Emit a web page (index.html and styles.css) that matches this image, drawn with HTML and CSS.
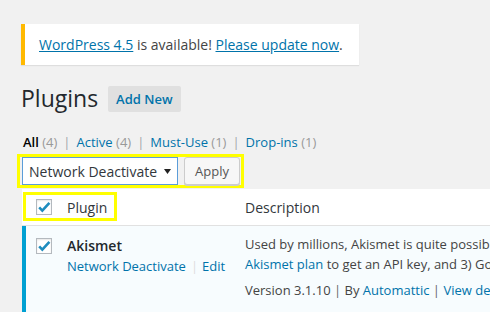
FILE: index.html
```html
<!DOCTYPE html>
<html lang="en">
<head>
  <meta charset="UTF-8" />
  <title>Plugins</title>
  <link rel="stylesheet" href="styles.css">
</head>
<body>
  <div class="wrap">
    <div class="update-nag">
      <a href="#">WordPress 4.5</a> is available! <a href="#">Please update now</a>.
    </div>

    <div class="title-row">
      <h1>Plugins</h1>
      <a href="#" class="add-new">Add New</a>
    </div>

    <ul class="views">
      <li><span class="current">All</span> <span class="count">(4)</span><span class="bar">|</span></li>
      <li><a href="#">Active <span class="count">(4)</span></a><span class="bar">|</span></li>
      <li><a href="#">Must-Use <span class="count">(1)</span></a><span class="bar">|</span></li>
      <li><a href="#">Drop-ins <span class="count">(1)</span></a></li>
    </ul>

    <div class="bulk">
      <div class="select">
        <span>Network Deactivate</span>
        <svg width="7" height="5" viewBox="0 0 7 5"><polygon points="0,0 7,0 3.5,5" fill="#222"/></svg>
      </div>
      <button class="apply">Apply</button>
    </div>

    <div class="plugins">
      <div class="head">
        <span class="mark"></span>
        <div class="check-col">
          <span class="box"><svg width="16" height="16" viewBox="0 0 16 16"><path d="M3.2 8.4 L6.3 11.6 L13.4 3.8" fill="none" stroke="#1e8cbe" stroke-width="2.6"/></svg></span>
        </div>
        <div class="name-col">Plugin</div>
        <div class="desc-col">Description</div>
      </div>

      <div class="row active">
        <div class="check-col">
          <span class="box"><svg width="16" height="16" viewBox="0 0 16 16"><path d="M3.2 8.4 L6.3 11.6 L13.4 3.8" fill="none" stroke="#1e8cbe" stroke-width="2.6"/></svg></span>
        </div>
        <div class="name-col">
          <strong class="plugin-title">Akismet</strong>
          <div class="row-actions"><a href="#">Network Deactivate</a><span class="sep">|</span><a href="#">Edit</a></div>
        </div>
        <div class="desc-col">
          <p>Used by millions, Akismet is quite possibly the best way in the world to protect your blog from spam. 2) <a href="#">Sign up for an</a></p>
          <p><a href="#">Akismet plan</a> to get an API key, and 3) Go to your Akismet configuration page, and save your API key.</p>
          <div class="version">Version 3.1.10 <span class="vsep">|</span> By <a href="#">Automattic</a> <span class="vsep">|</span> <a href="#">View details</a></div>
        </div>
      </div>
    </div>
  </div>
</body>
</html>
```

FILE: styles.css
```css
html, body {
  margin: 0;
  padding: 0;
}

body {
  background: #f1f1f1;
  color: #444;
  font-family: "Open Sans", sans-serif;
  font-size: 13px;
  width: 490px;
  height: 312px;
  overflow: hidden;
}

a {
  color: #0073aa;
  text-decoration: none;
}

.wrap {
  padding: 24px 0 0 21px;
}

.update-nag {
  display: inline-block;
  width: 305px;
  background: #fff;
  border-left: 4px solid #ffb900;
  box-shadow: 0 1px 1px rgba(0, 0, 0, 0.08);
  padding: 11px 15px 11px 14px;
  line-height: 19px;
  font-size: 14px;
  color: #444;
  white-space: nowrap;
}

.update-nag a {
  text-decoration: underline;
}

.title-row {
  display: flex;
  align-items: center;
  gap: 10px;
  margin-top: 19px;
}

h1 {
  margin: 0;
  font-size: 23px;
  font-weight: 400;
  line-height: 29px;
  color: #23282d;
}

.add-new {
  padding: 4px 8px;
  line-height: 18px;
  font-weight: 600;
  background: #e0e0e0;
  border-radius: 2px;
}

.views {
  list-style: none;
  margin: 19px 0 0;
  padding: 0 0 0 2px;
  display: flex;
  line-height: 20px;
  white-space: nowrap;
}

.views .current {
  color: #000;
  font-weight: 600;
}

.views .count {
  color: #999;
  font-weight: 400;
}

.views .bar {
  color: #a0a5aa;
  margin: 0 6px 0 6px;
}

.bulk {
  display: inline-flex;
  gap: 6px;
  margin: 2px 0 0 -4px;
  padding: 0 1px 0 2px;
  border: 3px solid #ffff00;
}

.select {
  box-sizing: border-box;
  width: 156px;
  height: 28px;
  display: flex;
  align-items: center;
  justify-content: space-between;
  padding: 0 6px 0 6px;
  background: #fff;
  border: 1px solid #5b9dd9;
  font-size: 14px;
  color: #32373c;
}

.apply {
  box-sizing: border-box;
  width: 56px;
  height: 28px;
  font: inherit;
  font-size: 13px;
  color: #555;
  background: #f7f7f7;
  border: 1px solid #ccc;
  border-radius: 3px;
  box-shadow: 0 1px 0 #ccc;
  padding: 0;
}

.plugins {
  margin: 1px 0 0 1px;
  background: #fff;
}

.head, .row {
  display: grid;
  grid-template-columns: 35px 178px 1fr;
}

.head {
  position: relative;
  height: 36px;
  align-items: center;
  border-bottom: 1px solid #e1e1e1;
  font-size: 14px;
  color: #32373c;
}

.head .mark {
  position: absolute;
  left: 1px;
  top: 3px;
  width: 94px;
  height: 29px;
  box-sizing: border-box;
  border: 3px solid #ffff00;
}

.check-col {
  padding-left: 14px;
}

.name-col, .desc-col {
  padding-left: 10px;
}

.box {
  display: block;
  box-sizing: border-box;
  width: 16px;
  height: 16px;
  border: 1px solid #b4b9be;
  background: #fff;
  box-shadow: inset 0 1px 2px rgba(0, 0, 0, 0.1);
}

.box svg {
  display: block;
  margin: -1px;
}

.row {
  background: #f7fcfe;
  box-shadow: inset 4px 0 0 #00a0d2;
  height: 100px;
}

.row .check-col {
  padding-top: 12px;
}

.row .name-col {
  padding-top: 10px;
}

.plugin-title {
  display: block;
  font-size: 14px;
  font-weight: 600;
  line-height: 20px;
  color: #23282d;
}

.row-actions {
  margin-top: 1px;
  line-height: 19.5px;
  white-space: nowrap;
}

.row-actions .sep {
  color: #ddd;
  margin: 0 4px 0 5px;
}

.row .desc-col {
  padding-top: 9px;
  white-space: nowrap;
  overflow: hidden;
}

.desc-col p {
  margin: 0;
  line-height: 19.5px;
}

.version {
  padding-top: 6.5px;
  line-height: 19.5px;
}

.vsep {
  color: #666;
}
```
